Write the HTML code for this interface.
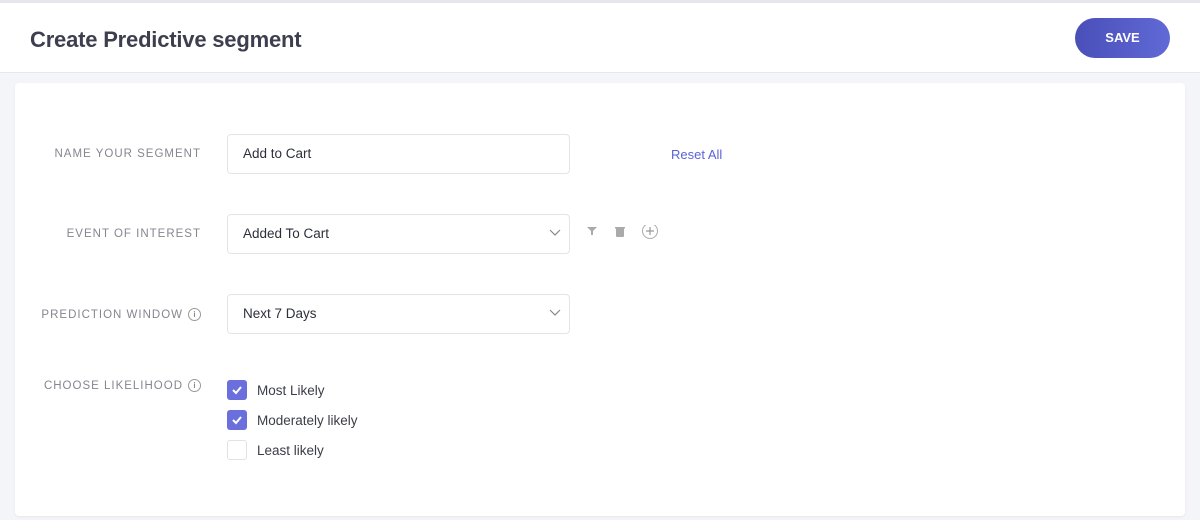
<!DOCTYPE html>
<html><head><style>
body{margin:0;width:1200px;height:520px;background:#f4f5f9;font-family:"Liberation Sans",sans-serif;position:relative;overflow:hidden}
.top{position:absolute;left:0;top:0;width:1200px;height:3px;background:#e6e7ec}
.hdr{position:absolute;left:0;top:3px;width:1200px;height:69px;background:#fff;border-bottom:1px solid #e6e7ee}
.hdr h1{position:absolute;left:30px;top:24px;margin:0;font-size:22px;font-weight:bold;color:#3d3f4e;letter-spacing:-0.2px}
.save{position:absolute;left:1075px;top:15px;width:95px;height:40px;border-radius:20px;background:linear-gradient(90deg,#4a4fb8,#6069d6);color:#fff;font-weight:bold;font-size:13px;text-align:center;line-height:40px}
.card{position:absolute;left:15px;top:83px;width:1170px;height:433px;background:#fff;border-radius:4px;box-shadow:0 1px 2px rgba(0,0,0,.06)}
.lbl{position:absolute;font-size:11.5px;letter-spacing:1px;color:#85868f;text-align:right;right:999px;white-space:nowrap}
.inp{position:absolute;left:227px;width:341px;height:38px;border:1px solid #e3e4e8;border-radius:4px;font-size:13.5px;color:#2d2f3a;line-height:38px;text-indent:15px;background:#fff}
.chev{position:absolute;right:8px;top:14px}
.info{display:inline-block;width:11px;height:11px;border:1px solid #999;border-radius:50%;font-size:8px;line-height:11px;text-align:center;letter-spacing:0;color:#888;vertical-align:1px;margin-left:5px;font-weight:bold}
.cb{position:absolute;left:227px;width:20px;height:20px;border-radius:3px;box-sizing:border-box}
.on{background:#6b6fdc}
.off{border:1px solid #e1e2e6}
.ct{position:absolute;left:257px;font-size:13.5px;color:#3b3d48}
</style></head><body>
<div class="top"></div>
<div class="hdr"><h1>Create Predictive segment</h1><div class="save">SAVE</div></div>
<div class="card"></div>
<div class="lbl" style="top:148px">NAME YOUR SEGMENT</div>
<div class="inp" style="top:134px">Add to Cart</div>
<div style="position:absolute;left:671px;top:147px;font-size:13px;color:#5b63d6">Reset All</div>
<div class="lbl" style="top:228px">EVENT OF INTEREST</div>
<div class="inp" style="top:214px">Added To Cart<svg class="chev" width="12" height="8"><path d="M1 1l5 5 5-5" fill="none" stroke="#888" stroke-width="1.2"/></svg></div>
<svg style="position:absolute;left:586px;top:225px" width="80" height="16">
<path d="M1 2h10l-4 4v4h-2v-4z" fill="#aaa"/>
<rect x="30" y="3" width="8" height="9" rx="1" fill="#aaa"/><rect x="29" y="2" width="10" height="1.5" fill="#aaa"/>
<circle cx="64" cy="6" r="7.5" fill="none" stroke="#aaa"/><path d="M64 2v8M60 6h8" stroke="#999" stroke-width="1.2"/>
</svg>
<div class="lbl" style="top:308px">PREDICTION WINDOW<span class="info">i</span></div>
<div class="inp" style="top:294px">Next 7 Days<svg class="chev" width="12" height="8"><path d="M1 1l5 5 5-5" fill="none" stroke="#888" stroke-width="1.2"/></svg></div>
<div class="lbl" style="top:379px">CHOOSE LIKELIHOOD<span class="info">i</span></div>
<div class="cb on" style="top:380px"><svg width="20" height="20"><path d="M6 10l3 3 5-6" fill="none" stroke="#fff" stroke-width="2"/></svg></div>
<div class="ct" style="top:383px">Most Likely</div>
<div class="cb on" style="top:410px"><svg width="20" height="20"><path d="M6 10l3 3 5-6" fill="none" stroke="#fff" stroke-width="2"/></svg></div>
<div class="ct" style="top:413px">Moderately likely</div>
<div class="cb off" style="top:440px"></div>
<div class="ct" style="top:443px">Least likely</div>
</body></html>
